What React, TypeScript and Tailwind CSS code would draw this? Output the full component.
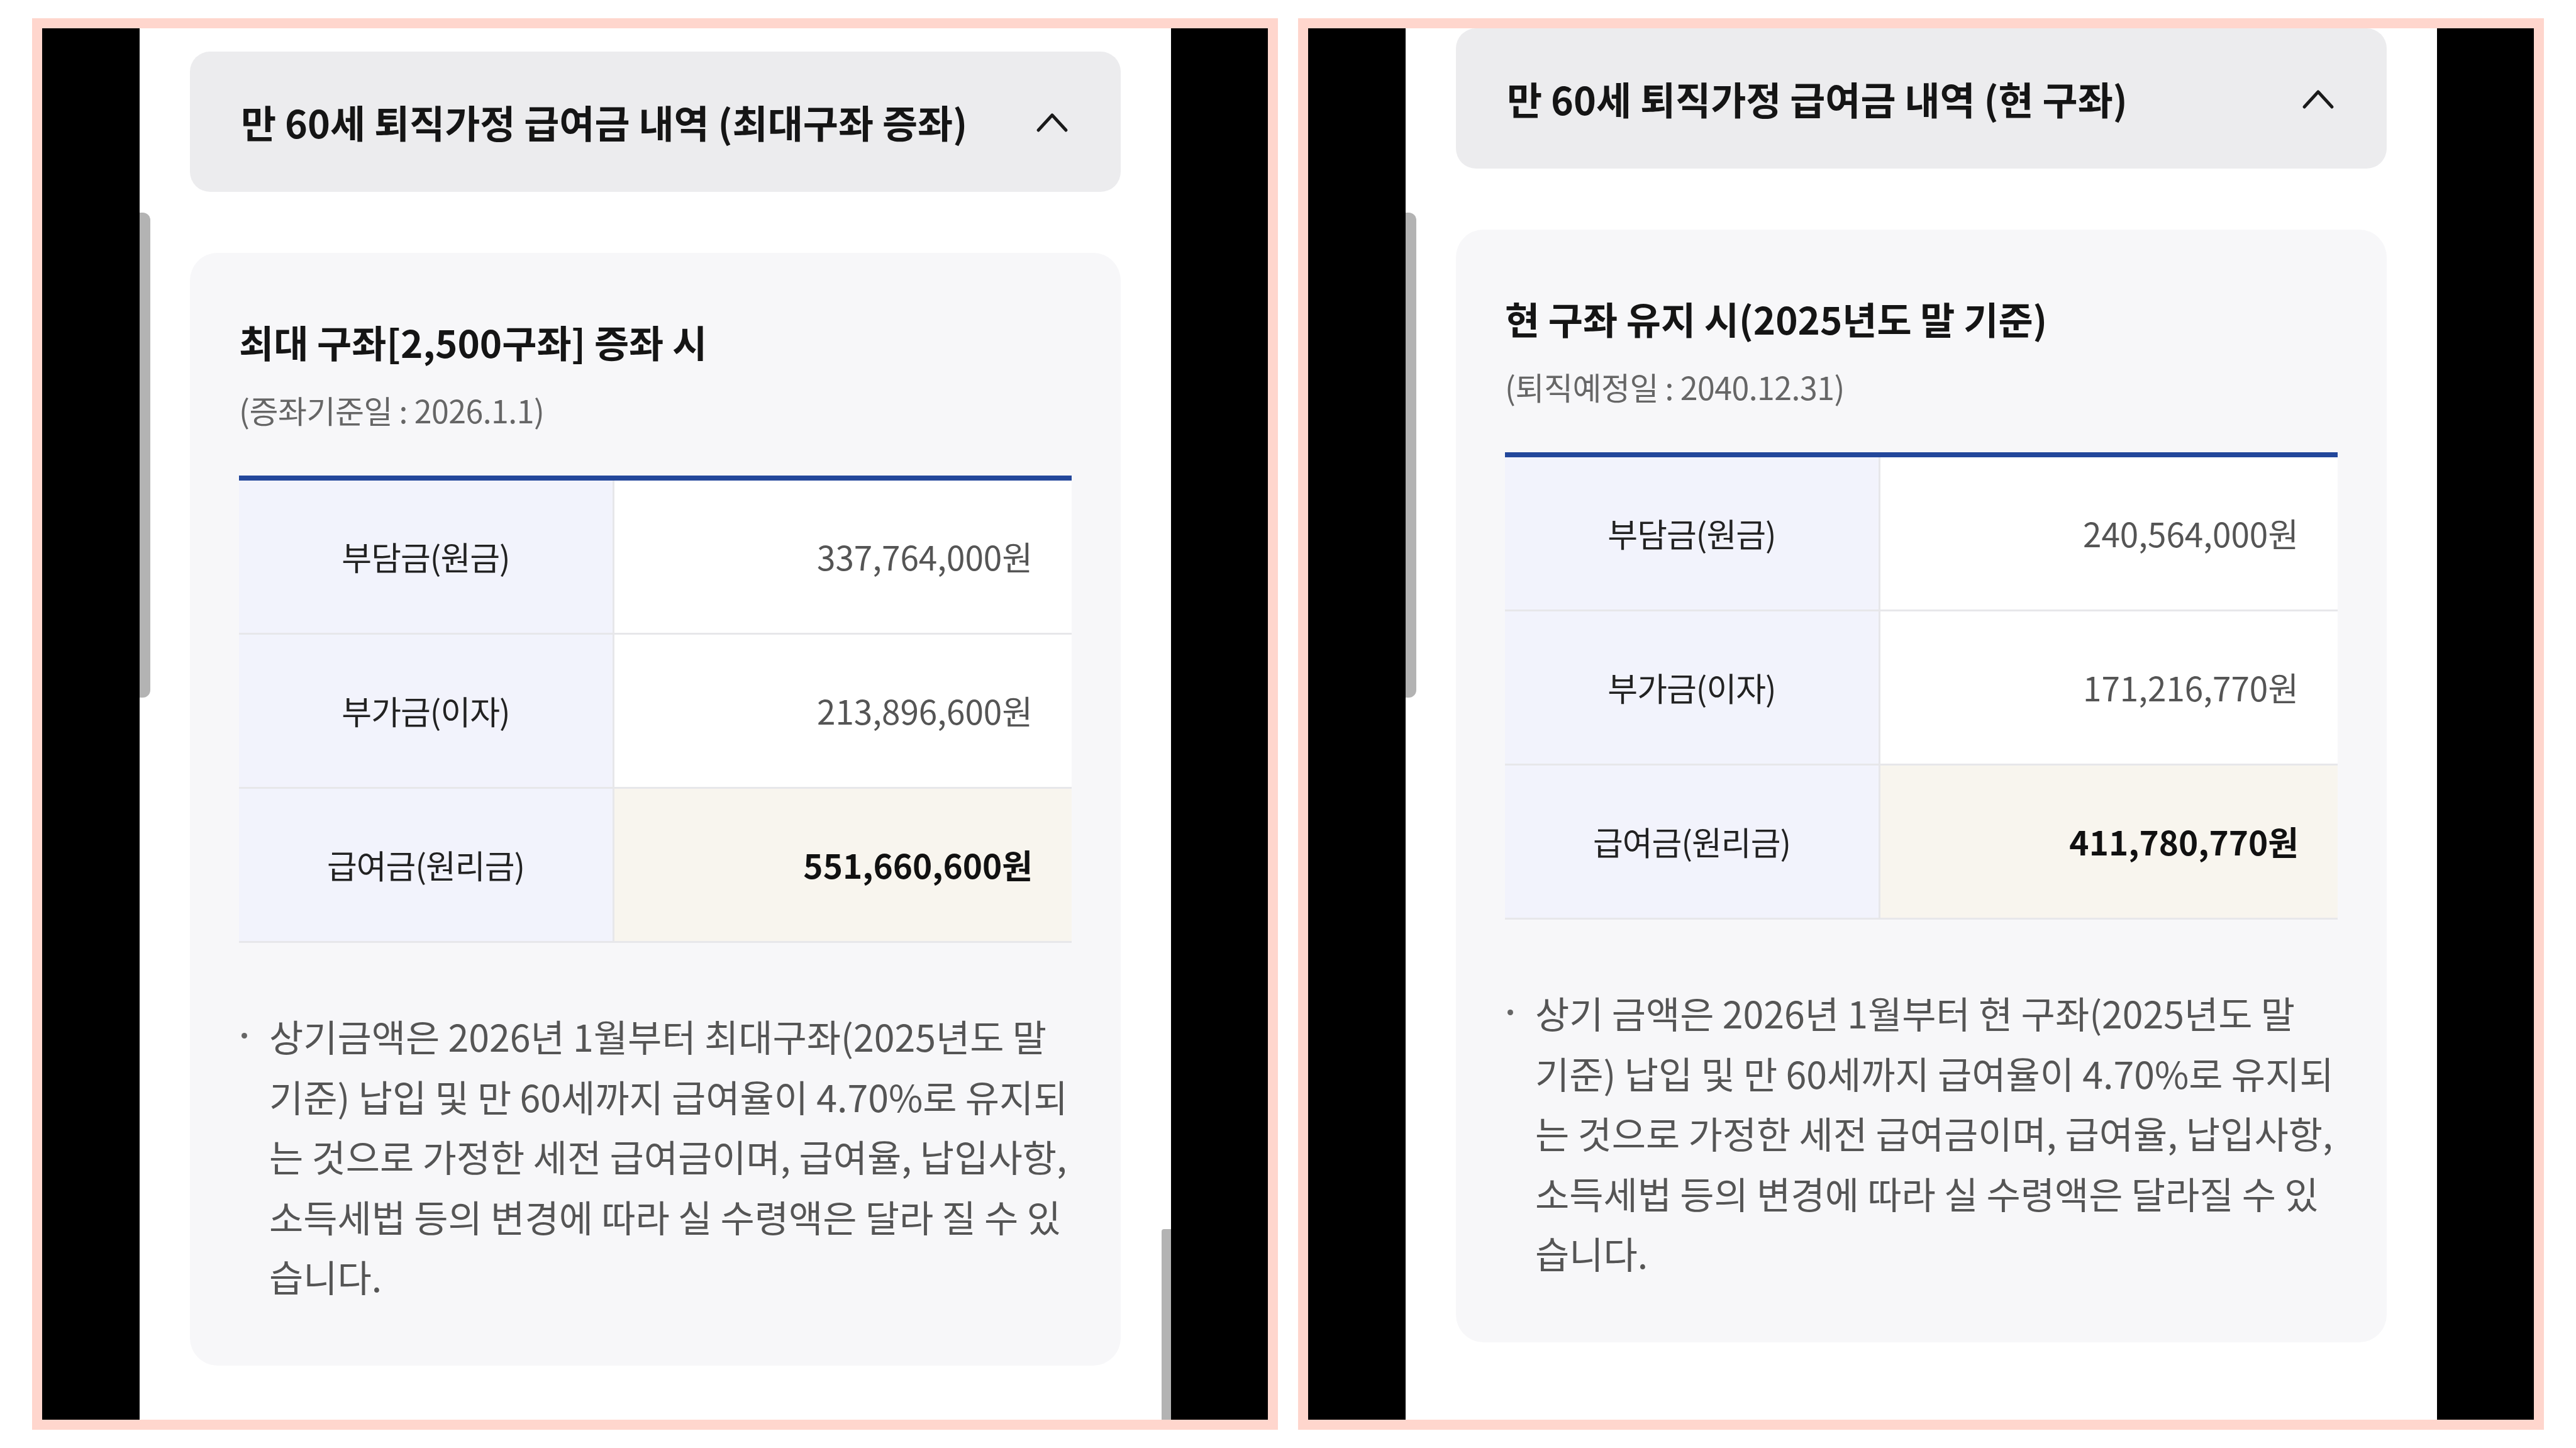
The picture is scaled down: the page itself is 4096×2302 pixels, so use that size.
import React from 'react';

type Row = { label: string; value: string; total?: boolean };

type PanelProps = {
  heading: string;
  title: string;
  subtitle: string;
  rows: Row[];
  note: string[];
  scrolled?: boolean;
  rightThumb?: boolean;
};

const ChevronUp: React.FC = () => (
  <svg width="54" height="36" viewBox="0 0 54 36" fill="none" aria-hidden>
    <polyline points="5,31 27,7 49,31" stroke="#1a1a1a" strokeWidth="5" strokeLinecap="round" strokeLinejoin="round" />
  </svg>
);

const Panel: React.FC<PanelProps> = ({ heading, title, subtitle, rows, note, scrolled, rightThumb }) => (
  <div className="flex h-[2244px] w-[1981px] shrink-0 border-[16px] border-[#ffd6cd] bg-black">
    <div className="w-[155px] shrink-0 bg-black" />
    <div className="relative w-[1640px] shrink-0 overflow-hidden bg-white">
      <div className={scrolled ? 'px-[80px] pt-0' : 'px-[80px] pt-[37px]'}>
        <header className="flex h-[223px] items-center justify-between rounded-[32px] bg-[#ececee] pl-[81px] pr-[82px]">
          <h2 className="whitespace-nowrap text-[61px] font-bold leading-none text-[#151515]">{heading}</h2>
          <ChevronUp />
        </header>

        <section className="mt-[97px] rounded-[44px] bg-[#f7f7f9] px-[78px] pb-[94px] pt-[99px]">
          <h3 className="whitespace-nowrap text-[60px] font-bold leading-[84px] text-[#151515]">{title}</h3>
          <p className="mt-[31px] whitespace-nowrap text-[50px] leading-[70px] tracking-[-0.5px] text-[#666]">{subtitle}</p>

          <div className="mt-[70px] border-t-[8px] border-[#23479b]">
            {rows.map((r) => (
              <div key={r.label} className="grid h-[245px] grid-cols-[597px_1fr] border-b-[3px] border-[#e7e7ea]">
                <div className="flex items-center justify-center border-r-[3px] border-[#e7e7ea] bg-[#f2f3fc] text-[52px] tracking-[-1px] text-[#222]">
                  {r.label}
                </div>
                <div
                  className={
                    r.total
                      ? 'flex items-center justify-end bg-[#f8f5ee] pr-[62px] text-[53px] font-bold text-[#111]'
                      : 'flex items-center justify-end bg-white pr-[62px] text-[53px] text-[#555]'
                  }
                >
                  {r.value}
                </div>
              </div>
            ))}
          </div>

          <div className="mt-[100px] flex">
            <div className="flex h-[95px] w-[48px] shrink-0 items-center pl-[4px]">
              <span className="block h-[9px] w-[9px] rounded-full bg-[#666]" />
            </div>
            <div className="text-[59px] leading-[95.5px] text-[#555]">
              {note.map((line) => (
                <div key={line} className="whitespace-nowrap">{line}</div>
              ))}
            </div>
          </div>
        </section>
      </div>

      <div className="absolute left-0 top-[293px] h-[771px] w-[17px] rounded-r-[12px] bg-[#b3b3b3]" />
      {rightThumb && <div className="absolute bottom-0 right-0 h-[303px] w-[15px] rounded-tl-[4px] bg-[#b3b3b3]" />}
    </div>
    <div className="flex-1 bg-black" />
  </div>
);

export default function App() {
  return (
    <div className="flex min-h-screen w-[4096px] gap-[32px] bg-white pl-[51px] pt-[29px] font-['Noto_Sans_CJK_KR','Noto_Sans',sans-serif]">
      <Panel
        heading="만 60세 퇴직가정 급여금 내역 (최대구좌 증좌)"
        title="최대 구좌[2,500구좌] 증좌 시"
        subtitle="(증좌기준일 : 2026.1.1)"
        rows={[
          { label: '부담금(원금)', value: '337,764,000원' },
          { label: '부가금(이자)', value: '213,896,600원' },
          { label: '급여금(원리금)', value: '551,660,600원', total: true },
        ]}
        note={[
          '상기금액은 2026년 1월부터 최대구좌(2025년도 말',
          '기준) 납입 및 만 60세까지 급여율이 4.70%로 유지되',
          '는 것으로 가정한 세전 급여금이며, 급여율, 납입사항,',
          '소득세법 등의 변경에 따라 실 수령액은 달라 질 수 있',
          '습니다.',
        ]}
        rightThumb
      />
      <Panel
        heading="만 60세 퇴직가정 급여금 내역 (현 구좌)"
        title="현 구좌 유지 시(2025년도 말 기준)"
        subtitle="(퇴직예정일 : 2040.12.31)"
        rows={[
          { label: '부담금(원금)', value: '240,564,000원' },
          { label: '부가금(이자)', value: '171,216,770원' },
          { label: '급여금(원리금)', value: '411,780,770원', total: true },
        ]}
        note={[
          '상기 금액은 2026년 1월부터 현 구좌(2025년도 말',
          '기준) 납입 및 만 60세까지 급여율이 4.70%로 유지되',
          '는 것으로 가정한 세전 급여금이며, 급여율, 납입사항,',
          '소득세법 등의 변경에 따라 실 수령액은 달라질 수 있',
          '습니다.',
        ]}
        scrolled
      />
    </div>
  );
}
